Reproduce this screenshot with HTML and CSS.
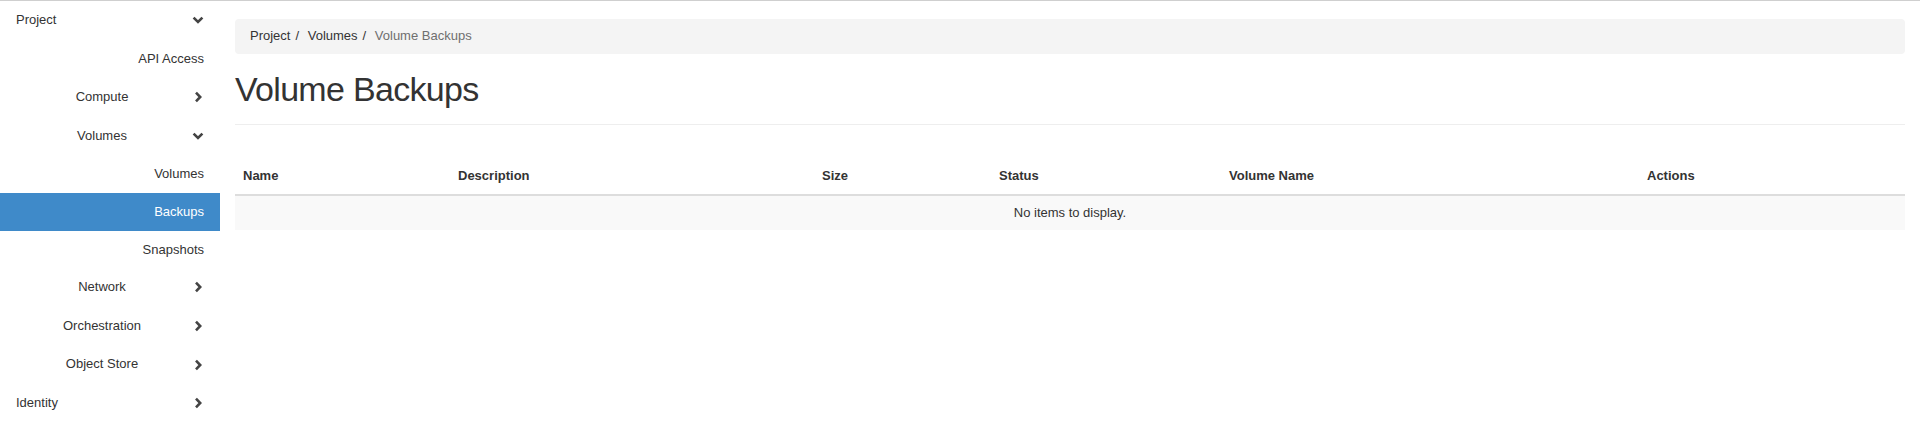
FILE: index.html
```html
<!DOCTYPE html>
<html lang="en">
<head>
  <meta charset="UTF-8">
  <title>Volume Backups</title>
  <meta name="viewport" content="width=device-width, initial-scale=1.0">
  <link rel="stylesheet" href="styles.css">
</head>
<body>

<div class="page">

  <!-- Sidebar -->
  <ul class="sidebar">
    <li class="nav-item top">
      <span class="label">Project</span>
      <svg class="chevron" viewBox="0 0 12 12"><polyline points="1.6,3.6 6,8 10.4,3.6"/></svg>
    </li>
    <li class="nav-item leaf"><span class="label">API Access</span></li>
    <li class="nav-item group">
      <span class="label">Compute</span>
      <svg class="chevron" viewBox="0 0 12 12"><polyline points="4,1.6 8.2,6 4,10.4"/></svg>
    </li>
    <li class="nav-item group">
      <span class="label">Volumes</span>
      <svg class="chevron" viewBox="0 0 12 12"><polyline points="1.6,3.6 6,8 10.4,3.6"/></svg>
    </li>
    <li class="nav-item leaf sub"><span class="label">Volumes</span></li>
    <li class="nav-item leaf sub active"><span class="label">Backups</span></li>
    <li class="nav-item leaf sub"><span class="label">Snapshots</span></li>
    <li class="nav-item group">
      <span class="label">Network</span>
      <svg class="chevron" viewBox="0 0 12 12"><polyline points="4,1.6 8.2,6 4,10.4"/></svg>
    </li>
    <li class="nav-item group">
      <span class="label">Orchestration</span>
      <svg class="chevron" viewBox="0 0 12 12"><polyline points="4,1.6 8.2,6 4,10.4"/></svg>
    </li>
    <li class="nav-item group">
      <span class="label">Object Store</span>
      <svg class="chevron" viewBox="0 0 12 12"><polyline points="4,1.6 8.2,6 4,10.4"/></svg>
    </li>
    <li class="nav-item top">
      <span class="label">Identity</span>
      <svg class="chevron" viewBox="0 0 12 12"><polyline points="4,1.6 8.2,6 4,10.4"/></svg>
    </li>
  </ul>

  <!-- Main content -->
  <div class="main">
    <ol class="breadcrumb">
      <li>Project</li>
      <li>Volumes</li>
      <li class="current">Volume Backups</li>
    </ol>

    <div class="page-header">
      <h1>Volume Backups</h1>
    </div>

    <table class="data-table">
      <colgroup>
        <col style="width: 215px">
        <col style="width: 364px">
        <col style="width: 177px">
        <col style="width: 230px">
        <col style="width: 418px">
        <col style="width: 266px">
      </colgroup>
      <thead>
        <tr>
          <th>Name</th>
          <th>Description</th>
          <th>Size</th>
          <th>Status</th>
          <th>Volume Name</th>
          <th>Actions</th>
        </tr>
      </thead>
      <tbody>
        <tr class="empty">
          <td colspan="6">No items to display.</td>
        </tr>
      </tbody>
    </table>
  </div>
</div>

</body>
</html>
```

FILE: styles.css
```css
body {
  font-family: "Liberation Sans", Arial, sans-serif;
  font-size: 13px;
  color: #333;
  background-color: #fff;
  margin: 0;
}

.page {
  display: flex;
  border-top: 1px solid #cfcfcf;
  min-height: 440px;
}

/* Sidebar */

.sidebar {
  width: 220px;
  flex-shrink: 0;
  list-style: none;
  margin: 0;
  padding: 0;
}

.nav-item {
  display: flex;
  align-items: center;
  padding: 10px 16px;
  line-height: 18.6px;
  color: #333;
}

.nav-item.sub {
  line-height: 17.6px;
}

.nav-item .label {
  flex: 1;
}

.nav-item.group .label {
  text-align: center;
}

.nav-item.leaf .label {
  text-align: right;
}

.nav-item.active {
  background-color: #3f8ac9;
  color: #fff;
}

.chevron {
  width: 12px;
  height: 12px;
  margin-left: 4px;
  flex-shrink: 0;
}

.chevron polyline {
  fill: none;
  stroke: #444;
  stroke-width: 2.6;
}

/* Main */

.main {
  flex: 1;
  padding: 18px 15px 0 15px;
  min-width: 0;
}

.breadcrumb {
  display: flex;
  list-style: none;
  margin: 0;
  padding: 8px 15px;
  line-height: 18.6px;
  background-color: #f4f4f4;
  border-radius: 4px;
}

.breadcrumb li + li:before {
  content: "/\00a0";
  padding: 0 5px;
  color: #333;
}

.breadcrumb .current {
  color: #6f6f6f;
}

.page-header {
  margin-top: 17px;
  padding-bottom: 16px;
  border-bottom: 1px solid #eee;
}

.page-header h1 {
  margin: 0;
  font-size: 34px;
  font-weight: normal;
  line-height: 37.4px;
  letter-spacing: -0.7px;
  color: #333;
}

.data-table {
  width: 100%;
  table-layout: fixed;
  border-collapse: collapse;
  margin-top: 34px;
}

.data-table th {
  text-align: left;
  font-weight: bold;
  padding: 8px;
  line-height: 18.6px;
  border-bottom: 2px solid #ddd;
}

.data-table td {
  padding: 8px;
  line-height: 18px;
}

.data-table .empty td {
  text-align: center;
  background-color: #f9f9f9;
}
```
